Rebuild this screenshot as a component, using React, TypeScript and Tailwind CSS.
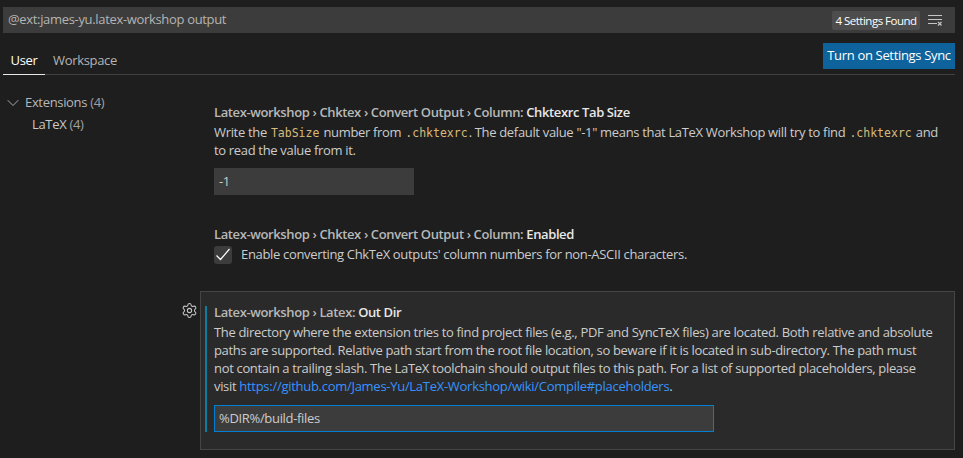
import { ChevronDown, Settings } from 'lucide-react'

const Code = ({ children }: { children: string }) => (
  <code className="mx-[1px] text-[#d7ba7d] font-['DejaVu_Sans_Mono',monospace] text-[11.5px] leading-none tracking-normal">{children}</code>
)

const Crumb = ({ path, name }: { path: string; name: string }) => (
  <div className="h-[18px] leading-[18px] font-semibold text-[#b8b8b8] whitespace-nowrap tracking-[-0.38px]">
    {path}: <span className="text-[#e7e7e7]">{name}</span>
  </div>
)

function FilterIcon() {
  return (
    <svg width="16" height="16" viewBox="0 0 16 16" fill="none" stroke="#c5c5c5" strokeWidth="1">
      <path d="M0 3.5h14M0 7.5h14M0 11.5h9" />
      <path d="M10 10l3.5 3.5M13.5 10L10 13.5" strokeWidth="1.2" />
    </svg>
  )
}

export default function App() {
  return (
    <div className="w-[963px] h-[458px] overflow-hidden bg-[#1e1e1e] pt-[7px] pr-[8px] pl-[3px] text-[13px] tracking-[-0.33px] text-[#cccccc] font-['Open_Sans',sans-serif]">
      {/* Search */}
      <div className="h-[26px] bg-[#3c3c3c] flex items-center pl-[5px] pr-[11px]">
        <span className="flex-1 text-[#b4b4b4]">@ext:james-yu.latex-workshop output</span>
        <span className="h-[19px] leading-[19px] bg-[#4d4d4d] rounded-[2px] px-[3px] w-[88px] text-center text-[11.5px] tracking-[-0.5px] text-white mr-[8px] whitespace-nowrap">
          4 Settings Found
        </span>
        <FilterIcon />
      </div>

      {/* Tabs */}
      <div className="h-[42px] flex items-end justify-between border-b border-[#404040] relative">
        <div className="flex items-end h-full">
          <div className="w-[42px] h-full flex items-center justify-center text-white border-b border-[#e7e7e7] mb-[-1px] pt-[14px]">
            User
          </div>
          <div className="ml-[8px] h-full flex items-center pt-[14px] text-[#b4b4b4]">Workspace</div>
        </div>
        <div className="self-start mt-[10px] w-[132px] h-[26px] bg-[#0e639c] text-white flex items-center justify-center whitespace-nowrap">
          Turn on Settings Sync
        </div>
      </div>

      <div className="flex">
        {/* Sidebar */}
        <div className="w-[197px] pt-[17px] shrink-0">
          <div className="h-[22px] flex items-center text-[#b8b8b8]">
            <ChevronDown size={20} strokeWidth={1} className="text-[#c5c5c5] mr-[2px]" />
            <span>
              Extensions <span className="text-[#a0a0a0]">(4)</span>
            </span>
          </div>
          <div className="h-[22px] flex items-center pl-[29px] text-[#c8c8c8]">
            <span>
              LaTeX <span className="text-[#a0a0a0]">(4)</span>
            </span>
          </div>
        </div>

        {/* Settings */}
        <div className="flex-1 min-w-0 relative">
          <div className="pl-[14px] pt-[28px] pr-[10px]">
            <Crumb path="Latex-workshop › Chktex › Convert Output › Column" name="Chktexrc Tab Size" />
            <p className="mt-[2px] leading-[18px] h-[36px]">
              Write the <Code>TabSize</Code> number from <Code>.chktexrc</Code>. The default value "-1" means that LaTeX Workshop will try to find <Code>.chktexrc</Code> and to read the value from it.
            </p>
            <div className="mt-[9px] w-[200px] h-[27px] bg-[#3c3c3c] flex items-center pl-[5px]">-1</div>

            <div className="mt-[30px]">
              <Crumb path="Latex-workshop › Chktex › Convert Output › Column" name="Enabled" />
            </div>
            <div className="flex items-center mt-[2px]">
              <div className="w-[18px] h-[18px] bg-[#3c3c3c] rounded-[3px] flex items-center justify-center">
                <svg width="16" height="16" viewBox="0 0 16 16" fill="none" stroke="#ffffff" strokeWidth="1.2">
                  <path d="M1.5 8.5l4 4L14.5 2" />
                </svg>
              </div>
              <span className="ml-[9px]">Enable converting ChkTeX outputs' column numbers for non-ASCII characters.</span>
            </div>
          </div>

          {/* Focused setting */}
          <div className="relative mt-[26px] h-[159px] border border-[#454545] bg-[#2a2a2a] pl-[13px] pr-[10px] pt-[11px]">
            <Settings size={17} strokeWidth={1.5} className="absolute left-[-20px] top-[10px] text-[#c5c5c5]" />
            <div className="absolute left-[4px] top-[14px] w-[2px] h-[126px] bg-[#0c7d9d]" />
            <Crumb path="Latex-workshop › Latex" name="Out Dir" />
            <p className="mt-[2px] leading-[18.2px] w-[722px]">
              The directory where the extension tries to find project files (e.g., PDF and SyncTeX files) are located. Both relative and absolute paths are supported. Relative path start from the root file location, so beware if it is located in sub-directory. The path must not contain a trailing slash. The LaTeX toolchain should output files to this path. For a list of supported placeholders, please visit <span className="text-[#3794ff] tracking-[-0.28px]">https://github.com/James-Yu/LaTeX-Workshop/wiki/Compile#placeholders</span>.
            </p>
            <div className="mt-[10px] w-[500px] h-[27px] bg-[#3c3c3c] border border-[#007fd4] flex items-center pl-[4px]">
              %DIR%/build-files
            </div>
          </div>
        </div>
      </div>
    </div>
  )
}
